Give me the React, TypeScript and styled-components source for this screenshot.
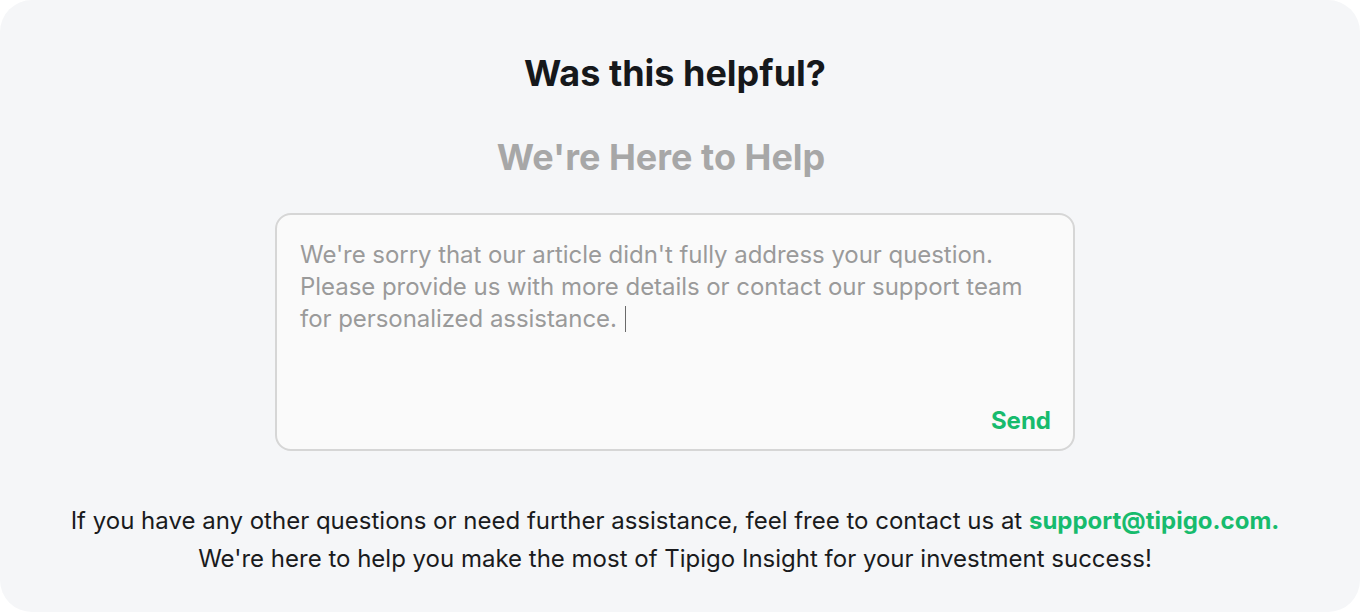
import React from "react";
import styled, { createGlobalStyle } from "styled-components";

const Global = createGlobalStyle`
  html, body { margin: 0; padding: 0; background: #ffffff; }
  body { font-family: Inter, "Noto Sans", sans-serif; }
`;

const Card = styled.section`
  box-sizing: border-box;
  width: 1360px;
  height: 612px;
  background: #f5f6f8;
  border-radius: 32px;
  display: flex;
  flex-direction: column;
  align-items: center;
  padding: 51px 10px 0 0;
`;

const Title = styled.h2`
  margin: 0;
  font-size: 36px;
  line-height: 44px;
  font-weight: 700;
  color: #16181b;
`;

const Subtitle = styled.h3`
  margin: 40px 0 0;
  padding-right: 28px;
  font-size: 36px;
  line-height: 44px;
  font-weight: 700;
  color: #a7a7a7;
`;

const Box = styled.div`
  box-sizing: border-box;
  margin-top: 34px;
  width: 800px;
  height: 238px;
  background: #fafafa;
  border: 2px solid #d6d6d6;
  border-radius: 16px;
  padding: 24px 22px 12px 23px;
  display: flex;
  flex-direction: column;
`;

const Message = styled.p`
  margin: 0;
  flex: 1;
  font-size: 24px;
  line-height: 32px;
  color: #9a9a9a;
  letter-spacing: -0.05px;
`;

const Caret = styled.span`
  display: inline-block;
  width: 1px;
  height: 26px;
  background: #6a6a6a;
  vertical-align: -5px;
  margin-left: 8px;
`;

const SendButton = styled.button`
  align-self: flex-end;
  border: none;
  background: none;
  padding: 0;
  font-family: inherit;
  font-size: 24px;
  line-height: 32px;
  font-weight: 700;
  color: #17bb6d;
  cursor: pointer;
`;

const Footer = styled.p`
  margin: 51px 0 0;
  text-align: center;
  font-size: 24px;
  line-height: 38px;
  color: #1a1b1d;
`;

const Email = styled.a`
  color: #17bb6d;
  font-weight: 700;
  text-decoration: none;
`;

export default function App() {
  return (
    <>
      <Global />
      <Card>
        <Title>Was this helpful?</Title>
        <Subtitle>We're Here to Help</Subtitle>
        <Box>
          <Message>
            We're sorry that our article didn't fully address your question.
            <br />
            Please provide us with more details or contact our support team
            <br />
            for personalized assistance.
            <Caret />
          </Message>
          <SendButton>Send</SendButton>
        </Box>
        <Footer>
          If you have any other questions or need further assistance, feel free to contact us at{" "}
          <Email href="#">support@tipigo.com.</Email>
          <br />
          We're here to help you make the most of Tipigo Insight for your investment success!
        </Footer>
      </Card>
    </>
  );
}
